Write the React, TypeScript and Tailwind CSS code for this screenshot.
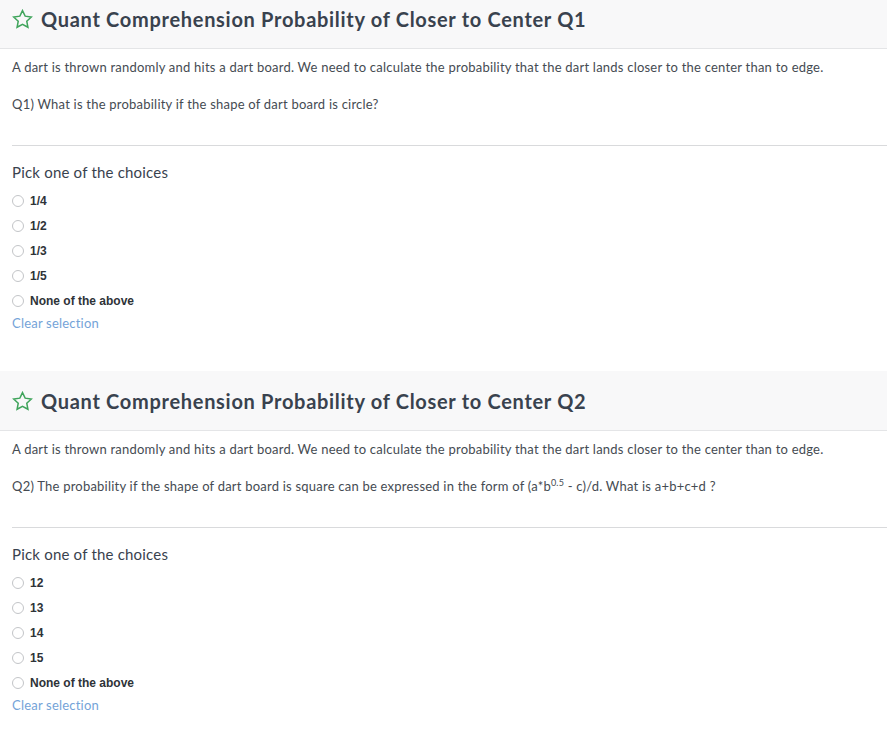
const questions = [
  {
    title: "Quant Comprehension Probability of Closer to Center Q1",
    question: <>Q1) What is the probability if the shape of dart board is circle?</>,
    choices: ["1/4", "1/2", "1/3", "1/5", "None of the above"],
  },
  {
    title: "Quant Comprehension Probability of Closer to Center Q2",
    question: (
      <>
        Q2) The probability if the shape of dart board is square can be expressed in the form of (a*b
        <sup className="text-[9px] relative -top-[5px]">0.5</sup> - c)/d. What is a+b+c+d ?
      </>
    ),
    choices: ["12", "13", "14", "15", "None of the above"],
  },
];

function StarIcon() {
  return (
    <svg width="21" height="20" viewBox="0 0 24 23" fill="none">
      <path
        d="M12 1.8l3.05 6.45 7.05.9-5.2 4.85 1.35 7L12 17.55 5.75 21l1.35-7L1.9 9.15l7.05-.9z"
        stroke="#3fa45b"
        strokeWidth="1.7"
        strokeLinejoin="miter"
      />
    </svg>
  );
}

function Question({ q }: { q: (typeof questions)[number] }) {
  return (
    <section className="mb-[38px]">
      <header className="h-[60px] flex items-center gap-[8px] px-[12px] bg-[#f8f8f9] border-b border-[#e4e5e7]">
        <StarIcon />
        <h1 className="text-[20px] font-bold text-[#39424e] tracking-[0.7px]">{q.title}</h1>
      </header>
      <div className="px-[12px] text-[13px] tracking-[0.22px] text-[#454b52]">
        <p className="pt-[10px] leading-[17px]">
          A dart is thrown randomly and hits a dart board. We need to calculate the probability that the dart lands closer to the center than to edge.
        </p>
        <p className="pt-[20px] leading-[17px]">{q.question}</p>
      </div>
      <div className="ml-[12px] mt-[32px] border-t border-[#d9dadc]" />
      <div className="px-[12px] pt-[16px]">
        <h2 className="text-[15px] text-[#39424e] leading-[20px] tracking-[0.2px]">Pick one of the choices</h2>
        <ul className="mt-[6px]">
          {q.choices.map((c) => (
            <li key={c} className="h-[25px] flex items-center gap-[6px]">
              <span className="w-[12px] h-[12px] rounded-full border border-[#c3c5c8] bg-white" />
              <span className="text-[12px] font-semibold text-[#2e3338] font-['Liberation_Sans',sans-serif]">{c}</span>
            </li>
          ))}
        </ul>
        <button className="block text-[13px] tracking-[0.2px] text-[#74a3d8] leading-[20px]">Clear selection</button>
      </div>
    </section>
  );
}

export default function App() {
  return (
    <div className="w-[887px] h-[737px] overflow-hidden bg-white font-['Lato',sans-serif]">
      <div className="-mt-[11px]">
        {questions.map((q) => (
          <Question key={q.title} q={q} />
        ))}
      </div>
    </div>
  );
}
